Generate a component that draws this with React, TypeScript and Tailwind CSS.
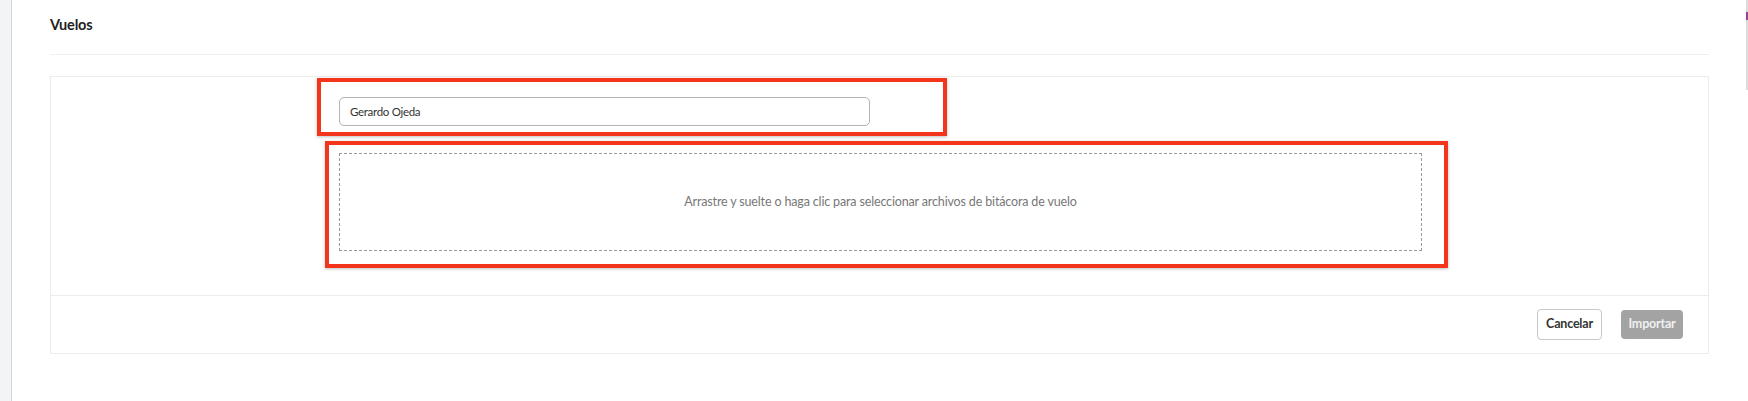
import React from 'react';

const App: React.FC = () => {
  return (
    <div className="relative flex h-[401px] w-full bg-white font-['Lato','Noto_Sans',sans-serif] overflow-hidden">
      {/* Side strip */}
      <div className="w-[12px] shrink-0 bg-[#f3f4f6] border-r border-[#d6d6d6]" />

      <main className="flex-1 pl-[38px] pr-[39px]">
        <h2 className="pt-[15px] text-[14.5px] leading-5 font-bold tracking-[-0.2px] text-[#1f1f1f]">Vuelos</h2>
        <div className="mt-[19px] border-t border-[#efefef]" />

        {/* Import card */}
        <div className="mt-[21px] border border-[#ececec]">
          <div className="pt-[20px] pb-[44px] pl-[288px]">
            <input
              type="text"
              defaultValue="Gerardo Ojeda"
              className="block h-[29px] w-[531px] rounded-[5px] border border-[#b3b3b3] px-[10px] text-[11.5px] tracking-[-0.3px] text-[#333] outline-none"
            />
            <div className="mt-[27px] flex h-[98px] w-[1083px] items-center justify-center border border-dashed border-[#9a9a9a]">
              <span className="text-[12.5px] tracking-[-0.15px] text-[#777]">
                Arrastre y suelte o haga clic para seleccionar archivos de bitácora de vuelo
              </span>
            </div>
          </div>

          <div className="flex h-[58px] items-center justify-end gap-[19px] border-t border-[#ececec] pr-[25px]">
            <button className="h-[31px] w-[65px] rounded-[4px] border border-[#c9c9c9] bg-white text-[12.5px] font-bold tracking-[-0.2px] text-[#333]">
              Cancelar
            </button>
            <button className="h-[29px] w-[62px] rounded-[4px] bg-[#a3a3a3] text-[12.5px] font-bold tracking-[-0.2px] text-[#f0f0f0]">
              Importar
            </button>
          </div>
        </div>
      </main>

      {/* Scrollbar edge */}
      <div className="absolute right-0 top-0 h-[90px] w-[2px] bg-[#dcdcdc]">
        <div className="mt-[12px] h-[8px] w-[2px] bg-[#9b3f9b]" />
      </div>

      {/* Annotation boxes */}
      <div className="absolute left-[317px] top-[78px] h-[58px] w-[630px] border-[4px] border-[#f3361b] shadow-[0_1px_3px_rgba(0,0,0,0.25)]" />
      <div className="absolute left-[325px] top-[141px] h-[127px] w-[1123px] border-[4px] border-[#f3361b] shadow-[0_1px_3px_rgba(0,0,0,0.25)]" />
    </div>
  );
};

export default App;
